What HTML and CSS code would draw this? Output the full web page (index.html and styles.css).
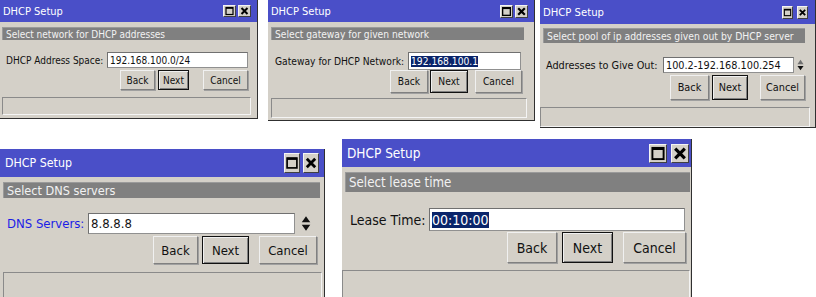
FILE: index.html
```html
<!DOCTYPE html>
<html lang="en">
<head>
    <meta charset="UTF-8">
    <title>DHCP Setup</title>
    <link rel="stylesheet" href="styles.css">
</head>
<body>

    <div class="row row-top">
        <div class="win win-1">
            <div class="titlebar">
                <span class="title">DHCP Setup</span>
                <span class="tb-btns">
                    <span class="tb-btn"><svg viewBox="0 0 10 10"><rect x="1.5" y="1.5" width="7" height="7" fill="none" stroke="#000" stroke-width="1.2"/><line x1="1.5" y1="2" x2="8.5" y2="2" stroke="#000" stroke-width="1.6"/></svg></span>
                    <span class="tb-btn"><svg viewBox="0 0 10 10"><path d="M2 2 L8 8 M8 2 L2 8" stroke="#000" stroke-width="2"/></svg></span>
                </span>
            </div>
            <div class="section">Select network for DHCP addresses</div>
            <div class="field">
                <span class="label">DHCP Address Space:</span>
                <div class="input">192.168.100.0/24</div>
            </div>
            <div class="actions">
                <button class="btn btn-back">Back</button>
                <button class="btn btn-next">Next</button>
                <button class="btn btn-cancel">Cancel</button>
            </div>
            <div class="status"></div>
        </div>

        <div class="win win-2">
            <div class="titlebar">
                <span class="title">DHCP Setup</span>
                <span class="tb-btns">
                    <span class="tb-btn"><svg viewBox="0 0 10 10"><rect x="1.5" y="1.5" width="7" height="7" fill="none" stroke="#000" stroke-width="1.2"/><line x1="1.5" y1="2" x2="8.5" y2="2" stroke="#000" stroke-width="1.6"/></svg></span>
                    <span class="tb-btn"><svg viewBox="0 0 10 10"><path d="M2 2 L8 8 M8 2 L2 8" stroke="#000" stroke-width="2"/></svg></span>
                </span>
            </div>
            <div class="section">Select gateway for given network</div>
            <div class="field">
                <span class="label">Gateway for DHCP Network:</span>
                <div class="input"><span class="sel">192.168.100.1</span></div>
            </div>
            <div class="actions">
                <button class="btn btn-back">Back</button>
                <button class="btn btn-next">Next</button>
                <button class="btn btn-cancel">Cancel</button>
            </div>
            <div class="status"></div>
        </div>

        <div class="win win-3">
            <div class="titlebar">
                <span class="title">DHCP Setup</span>
                <span class="tb-btns">
                    <span class="tb-btn"><svg viewBox="0 0 10 10"><rect x="1.5" y="1.5" width="7" height="7" fill="none" stroke="#000" stroke-width="1.2"/><line x1="1.5" y1="2" x2="8.5" y2="2" stroke="#000" stroke-width="1.6"/></svg></span>
                    <span class="tb-btn"><svg viewBox="0 0 10 10"><path d="M2 2 L8 8 M8 2 L2 8" stroke="#000" stroke-width="2"/></svg></span>
                </span>
            </div>
            <div class="section">Select pool of ip addresses given out by DHCP server</div>
            <div class="field">
                <span class="label">Addresses to Give Out:</span>
                <div class="input">100.2-192.168.100.254</div>
                <svg class="spin" viewBox="0 0 8 14"><path d="M4 1 L7.5 6 L0.5 6 Z" fill="#707070"/><path d="M0.5 8 L7.5 8 L4 13 Z" fill="#111"/></svg>
            </div>
            <div class="actions">
                <button class="btn btn-back">Back</button>
                <button class="btn btn-next">Next</button>
                <button class="btn btn-cancel">Cancel</button>
            </div>
            <div class="status"></div>
        </div>
    </div>

    <div class="row row-bottom">
        <div class="win win-4">
            <div class="titlebar">
                <span class="title">DHCP Setup</span>
                <span class="tb-btns">
                    <span class="tb-btn"><svg viewBox="0 0 10 10"><rect x="1.5" y="1.5" width="7" height="7" fill="none" stroke="#000" stroke-width="1.2"/><line x1="1.5" y1="2" x2="8.5" y2="2" stroke="#000" stroke-width="1.6"/></svg></span>
                    <span class="tb-btn"><svg viewBox="0 0 10 10"><path d="M2 2 L8 8 M8 2 L2 8" stroke="#000" stroke-width="2"/></svg></span>
                </span>
            </div>
            <div class="section">Select DNS servers</div>
            <div class="field">
                <span class="label label-blue">DNS Servers:</span>
                <div class="input">8.8.8.8</div>
                <svg class="spin" viewBox="0 0 8 14"><path d="M4 1 L7.5 6 L0.5 6 Z M0.5 8 L7.5 8 L4 13 Z" fill="#111"/></svg>
            </div>
            <div class="actions">
                <button class="btn btn-back">Back</button>
                <button class="btn btn-next">Next</button>
                <button class="btn btn-cancel">Cancel</button>
            </div>
            <div class="status"></div>
        </div>

        <div class="win win-5">
            <div class="titlebar">
                <span class="title">DHCP Setup</span>
                <span class="tb-btns">
                    <span class="tb-btn"><svg viewBox="0 0 10 10"><rect x="1.5" y="1.5" width="7" height="7" fill="none" stroke="#000" stroke-width="1.2"/><line x1="1.5" y1="2" x2="8.5" y2="2" stroke="#000" stroke-width="1.6"/></svg></span>
                    <span class="tb-btn"><svg viewBox="0 0 10 10"><path d="M2 2 L8 8 M8 2 L2 8" stroke="#000" stroke-width="2"/></svg></span>
                </span>
            </div>
            <div class="section">Select lease time</div>
            <div class="field">
                <span class="label">Lease Time:</span>
                <div class="input"><span class="sel">00:10:00</span></div>
            </div>
            <div class="actions">
                <button class="btn btn-back">Back</button>
                <button class="btn btn-next">Next</button>
                <button class="btn btn-cancel">Cancel</button>
            </div>
            <div class="status"></div>
        </div>
    </div>

</body>
</html>
```

FILE: styles.css
```css
* {
    margin: 0;
    padding: 0;
    box-sizing: border-box;
}

body {
    background: #fff;
    font-family: "DejaVu Sans", "Liberation Sans", sans-serif;
    font-stretch: condensed;
    overflow: hidden;
    width: 816px;
    height: 297px;
}

.row {
    display: flex;
    align-items: flex-start;
}

/* one window */
.win {
    width: var(--w);
    height: var(--h);
    font-size: var(--fs);
    background: #d4d0c8;
    border-right: 1px solid #303030;
    border-bottom: 1px solid #303030;
    display: flex;
    flex-direction: column;
    flex-shrink: 0;
    overflow: hidden;
}

.titlebar {
    height: var(--th);
    background: #4a4fc8;
    color: #fff;
    display: flex;
    align-items: center;
    justify-content: space-between;
    padding: 0 var(--tb-r) 0 var(--t-pl);
    flex-shrink: 0;
}

.title {
    font-size: var(--tfs);
}

.tb-btns {
    display: flex;
    gap: var(--tb-gap);
}

.tb-btn {
    width: var(--tb-w);
    height: var(--tb-h);
    background: #d4d0c8;
    border: 1px solid #404040;
    border-top-color: #f4f4f4;
    border-left-color: #f4f4f4;
    display: flex;
}

.tb-btn svg {
    width: 100%;
    height: 100%;
}

.section {
    margin: var(--sec-mt) 0 0 var(--sec-ml);
    width: var(--sec-w);
    height: var(--sec-h);
    line-height: var(--sec-h);
    font-size: var(--sec-fs);
    background: #808080;
    color: #f2f2f2;
    border-top: 1px solid #9a9a9a;
    border-left: 1px solid #9a9a9a;
    padding-left: 3px;
    white-space: nowrap;
    overflow: hidden;
    flex-shrink: 0;
}

.field {
    display: flex;
    align-items: center;
    margin-top: var(--f-mt);
    padding-left: var(--lab-x);
    height: var(--in-h);
    flex-shrink: 0;
}

.label {
    width: var(--lab-w);
    flex-shrink: 0;
    color: #111;
    white-space: nowrap;
}

.label-blue {
    color: #1c1ce6;
}

.input {
    width: var(--in-w);
    height: var(--in-h);
    flex-shrink: 0;
    background: #fff;
    border: 1px solid #909090;
    border-top-color: #707070;
    border-left-color: #707070;
    color: #111;
    padding-left: 2px;
    display: flex;
    align-items: center;
    white-space: nowrap;
    overflow: hidden;
}

.sel {
    background: #0a246a;
    color: #fff;
}

.spin {
    width: var(--spin-w);
    height: var(--spin-h);
    margin-left: var(--spin-ml);
    flex-shrink: 0;
}

.actions {
    display: flex;
    margin-top: var(--a-mt);
    padding-left: var(--a-pl);
    height: var(--a-h);
    flex-shrink: 0;
}

.btn {
    height: 100%;
    font: inherit;
    color: #111;
    background: #d4d0c8;
    border: 1px solid #808080;
    border-top-color: #f0f0f0;
    border-left-color: #f0f0f0;
    box-shadow: 1px 1px 0 #a0a0a0;
}

.btn-back {
    width: var(--back-w);
}

.btn-next {
    width: var(--next-w);
    margin-left: var(--gap1);
    border: 1px solid #111;
    box-shadow: inset 1px 1px 0 #f0f0f0, inset -1px -1px 0 #808080;
}

.btn-cancel {
    width: var(--cancel-w);
    margin-left: var(--gap2);
}

.status {
    margin: var(--st-mt) 0 0 var(--st-ml);
    width: var(--st-w);
    height: var(--st-h);
    border: 1px solid #f4f4f4;
    border-top-color: #8a8a8a;
    border-left-color: #8a8a8a;
    flex-shrink: 0;
}

/* sizes of each window */
.win-1 {
    --w: 258px; --h: 119px; --fs: 10px; --sec-fs: 10px;
    --th: 22px; --tfs: 11px; --t-pl: 3px; --tb-r: 6px;
    --tb-w: 13px; --tb-h: 12px; --tb-gap: 2px;
    --sec-mt: 5px; --sec-ml: 2px; --sec-w: 248px; --sec-h: 13px;
    --f-mt: 12px; --lab-x: 6px; --lab-w: 101px; --in-w: 141px; --in-h: 16px;
    --a-mt: 2px; --a-pl: 120px; --a-h: 20px;
    --back-w: 35px; --gap1: 3px; --next-w: 31px; --gap2: 14px; --cancel-w: 45px;
    --st-mt: 7px; --st-ml: 2px; --st-w: 249px; --st-h: 18px;
}

.win-2 {
    margin-left: 10px;
    --w: 267px; --h: 121px; --fs: 10.2px; --sec-fs: 10.2px;
    --th: 22px; --tfs: 11px; --t-pl: 3px; --tb-r: 6px;
    --tb-w: 13px; --tb-h: 13px; --tb-gap: 2px;
    --sec-mt: 5px; --sec-ml: 3px; --sec-w: 253px; --sec-h: 13px;
    --f-mt: 12px; --lab-x: 7px; --lab-w: 133px; --in-w: 113px; --in-h: 18px;
    --a-mt: 0px; --a-pl: 122px; --a-h: 23px;
    --back-w: 38px; --gap1: 2px; --next-w: 38px; --gap2: 7px; --cancel-w: 47px;
    --st-mt: 5px; --st-ml: 3px; --st-w: 256px; --st-h: 20px;
}

.win-3 {
    margin-left: 5px;
    --w: 276px; --h: 128px; --fs: 10.8px; --sec-fs: 10.3px;
    --th: 24px; --tfs: 11.2px; --t-pl: 3px; --tb-r: 7px;
    --tb-w: 11px; --tb-h: 13px; --tb-gap: 4px;
    --sec-mt: 4px; --sec-ml: 3px; --sec-w: 262px; --sec-h: 15px;
    --f-mt: 14px; --lab-x: 6px; --lab-w: 117px; --in-w: 131px; --in-h: 16px;
    --spin-w: 7px; --spin-h: 14px; --spin-ml: 3px;
    --a-mt: 2px; --a-pl: 130px; --a-h: 25px;
    --back-w: 39px; --gap1: 3px; --next-w: 36px; --gap2: 12px; --cancel-w: 45px;
    --st-mt: 7px; --st-ml: 0px; --st-w: 270px; --st-h: 20px;
}

.win-4 {
    margin-top: 21px;
    --w: 325px; --h: 160px; --fs: 13px; --sec-fs: 12.6px;
    --th: 28px; --tfs: 12.3px; --t-pl: 5px; --tb-r: 5px;
    --tb-w: 16px; --tb-h: 20px; --tb-gap: 3px;
    --sec-mt: 5px; --sec-ml: 3px; --sec-w: 317px; --sec-h: 16px;
    --f-mt: 15px; --lab-x: 7px; --lab-w: 81px; --in-w: 207px; --in-h: 21px;
    --spin-w: 12px; --spin-h: 17px; --spin-ml: 5px;
    --a-mt: 2px; --a-pl: 153px; --a-h: 28px;
    --back-w: 45px; --gap1: 4px; --next-w: 47px; --gap2: 10px; --cancel-w: 58px;
    --st-mt: 8px; --st-ml: 3px; --st-w: 319px; --st-h: 30px;
}

.win-5 {
    margin: 11px 0 0 17px;
    --w: 350px; --h: 170px; --fs: 14px; --sec-fs: 13.2px;
    --th: 28px; --tfs: 13.5px; --t-pl: 5px; --tb-r: 2px;
    --tb-w: 18px; --tb-h: 19px; --tb-gap: 4px;
    --sec-mt: 5px; --sec-ml: 3px; --sec-w: 345px; --sec-h: 20px;
    --f-mt: 16px; --lab-x: 8px; --lab-w: 79px; --in-w: 256px; --in-h: 23px;
    --a-mt: 1px; --a-pl: 165px; --a-h: 31px;
    --back-w: 50px; --gap1: 5px; --next-w: 51px; --gap2: 10px; --cancel-w: 63px;
    --st-mt: 7px; --st-ml: 0px; --st-w: 348px; --st-h: 30px;
}
```
